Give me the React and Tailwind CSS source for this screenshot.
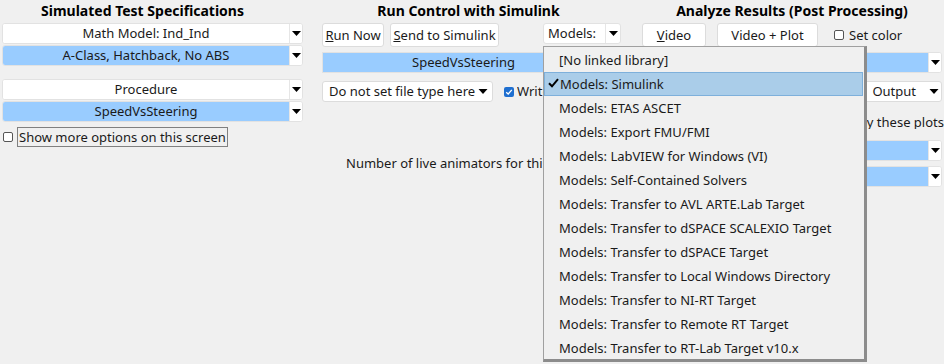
import React from "react";

function Tri({ w = 9 }) {
  return (
    <svg width={w} height="5" viewBox="0 0 9 5">
      <path d="M0 0 H9 L4.5 5 Z" fill="#000" />
    </svg>
  );
}

function Combo({ text, blue, className = "" }) {
  return (
    <div className={`flex h-[21px] rounded-[3px] border border-[#e2e2e2] bg-white overflow-hidden ${className}`}>
      <div className={`flex-1 flex items-center justify-center ${blue ? "bg-[#99ccff]" : "bg-white"}`}>{text}</div>
      <div className="w-[13px] flex items-center justify-center bg-white border-l border-[#e6e6e6]">
        <Tri />
      </div>
    </div>
  );
}

function Btn({ children, className = "" }) {
  return (
    <div className={`h-[24px] flex items-center justify-center bg-white border border-[#dcdcdc] rounded-[3px] ${className}`}>
      {children}
    </div>
  );
}

function Check({ checked, className = "" }) {
  return checked ? (
    <div className={`w-[10px] h-[10px] rounded-[2px] bg-[#1f6fd0] flex items-center justify-center ${className}`}>
      <svg width="8" height="8" viewBox="0 0 8 8">
        <path d="M1.2 4.2 L3.2 6 L6.8 1.8" stroke="#fff" strokeWidth="1.3" fill="none" />
      </svg>
    </div>
  ) : (
    <div className={`w-[10px] h-[10px] rounded-[2px] bg-white border border-[#555] ${className}`} />
  );
}

const items = [
  "[No linked library]",
  "Models: Simulink",
  "Models: ETAS ASCET",
  "Models: Export FMU/FMI",
  "Models: LabVIEW for Windows (VI)",
  "Models: Self-Contained Solvers",
  "Models: Transfer to AVL ARTE.Lab Target",
  "Models: Transfer to dSPACE SCALEXIO Target",
  "Models: Transfer to dSPACE Target",
  "Models: Transfer to Local Windows Directory",
  "Models: Transfer to NI-RT Target",
  "Models: Transfer to Remote RT Target",
  "Models: Transfer to RT-Lab Target v10.x",
];

export default function App() {
  return (
    <div
      className="relative w-[944px] h-[364px] overflow-hidden bg-[#f0f0f0] text-[13px] leading-none text-[#1a1a1a]"
      style={{ fontFamily: '"Noto Sans", "Open Sans", sans-serif' }}
    >
      <div className="flex">
        {/* Left column */}
        <div className="w-[301px] ml-[2px] flex flex-col">
          <div className="h-[22px] pr-[20px] flex items-center justify-center font-bold text-[14px] text-black">
            Simulated Test Specifications
          </div>
          <Combo text="Math Model: Ind_Ind" className="mt-[1px]" />
          <Combo text="A-Class, Hatchback, No ABS" blue className="mt-[1px]" />
          <Combo text="Procedure" className="mt-[13px]" />
          <Combo text="SpeedVsSteering" blue className="mt-[1px]" />
          <div className="mt-[5px] flex items-center">
            <Check className="ml-[1px]" />
            <div className="ml-[4px] h-[20px] px-[1px] flex items-center border border-[#808080]">
              Show more options on this screen
            </div>
          </div>
        </div>

        {/* Middle column */}
        <div className="w-[299px] ml-[19px] flex flex-col">
          <div className="h-[22px] pr-[6px] flex items-center justify-center font-bold text-[14px] text-black">
            Run Control with Simulink
          </div>
          <div className="mt-[1px] flex items-start">
            <Btn className="w-[62px]">
              <span className="underline">R</span>un Now
            </Btn>
            <Btn className="ml-[6px] w-[109px]">
              <span className="underline">S</span>end to Simulink
            </Btn>
            <div className="ml-[44px] w-[78px] h-[21px] flex bg-white border border-[#e2e2e2] rounded-[3px]">
              <div className="flex-1 flex items-center pl-[4px]">Models:</div>
              <div className="w-[15px] flex items-center justify-center border-l border-[#e6e6e6]">
                <Tri />
              </div>
            </div>
          </div>
          <div className="mt-[5px] w-[283px] h-[21px] bg-[#99ccff] border border-[#e2e2e2] flex items-center justify-center">
            SpeedVsSteering
          </div>
          <div className="mt-[8px] flex items-center">
            <div className="w-[171px] h-[21px] bg-white border border-[#dcdcdc] rounded-[3px] flex items-center justify-between pl-[6px] pr-[4px]">
              <span>Do not set file type here</span>
              <Tri w={10} />
            </div>
            <Check checked className="ml-[11px]" />
            <div className="ml-[3px] w-[26px] overflow-hidden whitespace-nowrap">Write</div>
          </div>
          <div className="mt-[55px] ml-[24px] w-[197px] overflow-hidden whitespace-nowrap">
            Number of live animators for this
          </div>
        </div>

        {/* Right column */}
        <div className="w-[300px] ml-[21px] flex flex-col">
          <div className="h-[22px] flex items-center justify-center font-bold text-[14px] text-black">
            Analyze Results (Post Processing)
          </div>
          <div className="mt-[1px] flex items-center">
            <Btn className="w-[64px]">
              <span className="underline">V</span>ideo
            </Btn>
            <Btn className="ml-[11px] w-[101px]">Video + Plot</Btn>
            <Check className="ml-[16px]" />
            <span className="ml-[5px]">Set color</span>
          </div>
          <Combo text="" blue className="mt-[5px]" />
          <div className="mt-[8px] h-[21px] bg-white border border-[#dcdcdc] rounded-[3px] flex items-center justify-end pr-[2px]">
            <span className="mr-[13px]">Output</span>
            <Tri w={10} />
          </div>
          <div className="mt-[14px] self-end -mr-[2px] w-[78px] flex justify-end overflow-hidden whitespace-nowrap">
            <span className="shrink-0">y these plots</span>
          </div>
          <Combo text="" blue className="mt-[11px]" />
          <Combo text="" blue className="mt-[5px]" />
        </div>
      </div>

      {/* Dropdown menu */}
      <div className="absolute left-[543px] top-[46px] w-[324px] h-[316px] bg-[#f0f0f0] border-t border-l border-[#a0a0a0] border-r-[3px] border-b-[3px] border-r-[#8c8c8c] border-b-[#8c8c8c] pt-[1px]">
        {items.map((t, i) =>
          i === 1 ? (
            <div
              key={t}
              className="h-[24px] flex items-center pl-[3px] mr-[1px] bg-[#aacde9] border border-[#7eb0db]"
            >
              <svg width="11" height="10" viewBox="0 0 11 10" className="mr-[1px] -mt-[3px]">
                <path d="M1 5.2 L4 8.3 L10 1.2" stroke="#000" strokeWidth="2" fill="none" />
              </svg>
              <span>{t}</span>
            </div>
          ) : (
            <div key={t} className="h-[24px] flex items-center pl-[15px]">
              {t}
            </div>
          )
        )}
      </div>
    </div>
  );
}
